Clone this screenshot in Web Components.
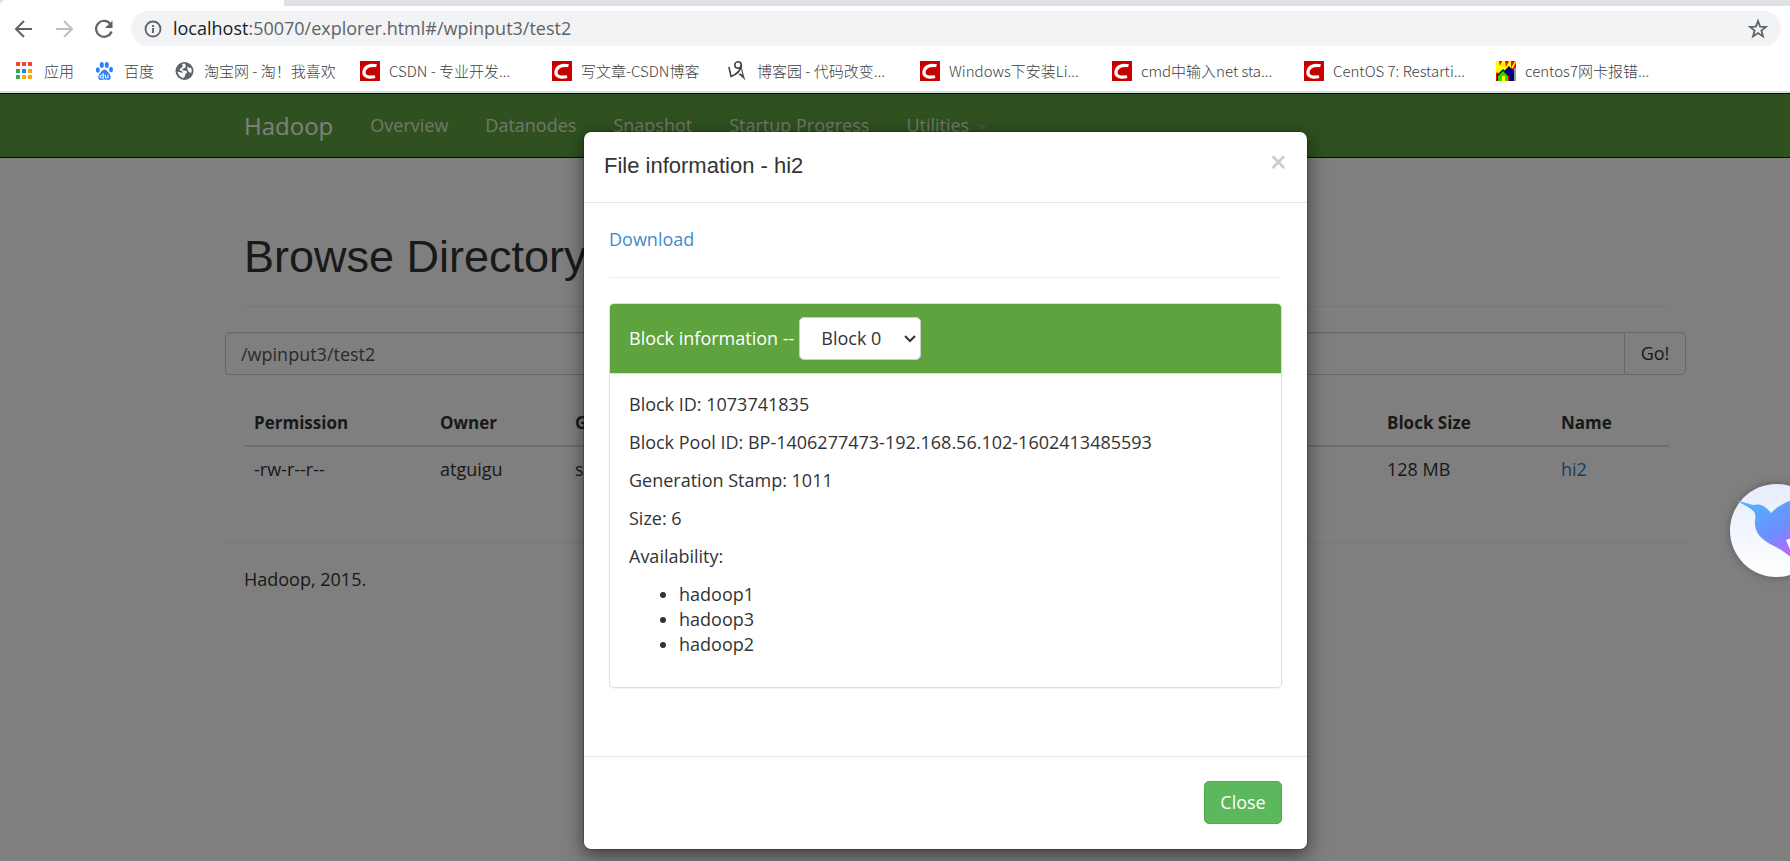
<!DOCTYPE html>
<html lang="zh-CN">
<head>
<meta charset="utf-8">
<title>Browsing HDFS</title>
<style>
html, body { margin: 0; height: 100%; }
body { font-family: "Open Sans", "Noto Sans CJK SC", sans-serif; font-size: 18px; line-height: 25px; color: #333; overflow: hidden; }
</style>
</head>
<body>
<browser-window>
  <browser-toolbar slot="chrome"></browser-toolbar>
  <bookmark-bar slot="chrome">
    <bookmark-link icon="apps" style="--w:80px">应用</bookmark-link>
    <bookmark-link icon="baidu" style="--w:80px">百度</bookmark-link>
    <bookmark-link icon="globe" style="--w:185px">淘宝网 - 淘！我喜欢</bookmark-link>
    <bookmark-link icon="csdn">CSDN - 专业开发...</bookmark-link>
    <bookmark-link icon="csdn" style="--w:176px">写文章-CSDN博客</bookmark-link>
    <bookmark-link icon="cnblogs">博客园 - 代码改变...</bookmark-link>
    <bookmark-link icon="csdn">Windows下安装Li...</bookmark-link>
    <bookmark-link icon="csdn">cmd中输入net sta...</bookmark-link>
    <bookmark-link icon="csdn">CentOS 7: Restarti...</bookmark-link>
    <bookmark-link icon="house">centos7网卡报错...</bookmark-link>
  </bookmark-bar>
  <hadoop-navbar></hadoop-navbar>
  <hadoop-explorer></hadoop-explorer>
  <file-dialog slot="overlay" heading="File information - hi2">
    <block-panel>
      <p>Block ID: 1073741835</p>
      <p>Block Pool ID: BP-1406277473-192.168.56.102-1602413485593</p>
      <p>Generation Stamp: 1011</p>
      <p>Size: 6</p>
      <p>Availability:</p>
      <ul><li>hadoop1</li><li>hadoop3</li><li>hadoop2</li></ul>
    </block-panel>
  </file-dialog>
  <bird-widget slot="overlay"></bird-widget>
</browser-window>

<script>
const define = (name, html, setup) => {
  const template = document.createElement('template');
  template.innerHTML = html;
  customElements.define(name, class extends HTMLElement {
    constructor() {
      super();
      this.attachShadow({ mode: 'open' }).append(template.content.cloneNode(true));
    }
    connectedCallback() { if (setup) setup(this, this.shadowRoot); }
  });
};

define('browser-window', `
<style>
:host { display: flex; flex-direction: column; height: 100vh; overflow: hidden; }
.tabs { height: 6px; background: #dee1e6; }
.tab { display: block; height: 6px; width: 284px; background: #fff; border-radius: 6px 0 0 0; }
.chrome { background: #fff; border-bottom: 2px solid #dcdde0; }
main { flex: 1; position: relative; overflow: hidden; background: #fff; }
</style>
<div class="tabs"><span class="tab"></span></div>
<div class="chrome"><slot name="chrome"></slot></div>
<main><slot></slot><slot name="overlay"></slot></main>`);

define('browser-toolbar', `
<style>
:host { display: flex; align-items: center; gap: 16px; padding: 5px 9px 4px 12px; }
button { border: 0; background: none; padding: 0; width: 24px; height: 24px; }
button svg { display: block; }
.address { flex: 1; display: flex; align-items: center; gap: 10px; height: 35px; border-radius: 18px; background: #f1f3f4; padding: 0 11px 0 12px; margin-left: -1px; }
.url { flex: 1; color: #5f6368; white-space: nowrap; }
.url b { font-weight: 400; color: #202124; }
</style>
<button aria-label="Back"><svg width="24" height="24" viewBox="0 0 24 24" fill="none" stroke="#5f6368" stroke-width="2"><path d="M20 12H4.500M12 4l-8 8 8 8"/></svg></button>
<button aria-label="Forward"><svg width="24" height="24" viewBox="0 0 24 24" fill="none" stroke="#bdc1c6" stroke-width="2"><path d="M4 12h15.500M12 4l8 8-8 8"/></svg></button>
<button aria-label="Reload"><svg width="24" height="24" viewBox="0 0 24 24"><path d="M18.500 7A8 8 0 1 0 19.600 14.500" fill="none" stroke="#5f6368" stroke-width="2.200"/><path d="M20.500 3.500v7.500H13z" fill="#5f6368"/></svg></button>
<div class="address">
<svg width="20" height="20" viewBox="0 0 20 20"><circle cx="10" cy="10" r="7.500" fill="none" stroke="#5f6368" stroke-width="1.800"/><path d="M9.100 9h1.900v5H9.100zM9.100 6h1.900v1.900H9.100z" fill="#5f6368"/></svg>
<span class="url"><b>localhost</b>:50070/explorer.html#/wpinput3/test2</span>
<button aria-label="Bookmark this tab"><svg width="24" height="24" viewBox="0 0 24 24"><path d="M12 4l2.100 5.600 5.900.3-4.600 3.700 1.600 5.800-5-3.300-5 3.300 1.600-5.800L4 9.900l5.900-.3z" fill="none" stroke="#5f6368" stroke-width="1.800"/></svg></button>
</div>`);

define('bookmark-bar', `
<style>
:host { display: flex; align-items: center; height: 41px; padding-left: 15px; color: #3c4043; overflow: hidden; }
</style><slot></slot>`);

const ICONS = {
  apps: `<g><path fill="#f44336" d="M1 1h4v4H1zM7 1h4v4H7zM13 1h4v4h-4z"/><path fill="#34a853" d="M1 8h4v4H1zM1 14h4v4H1z"/><path fill="#1e88e5" d="M7 8h4v4H7z"/><path fill="#fbab00" d="M13 8h4v4h-4zM7 14h4v4H7zM13 14h4v4h-4z"/></g>`,
  baidu: `<g fill="#2b80ff"><ellipse cx="2.800" cy="9" rx="2" ry="2.700"/><ellipse cx="6.800" cy="4" rx="2" ry="2.900"/><ellipse cx="11.800" cy="4" rx="2" ry="2.900"/><ellipse cx="16" cy="8.500" rx="2" ry="2.700"/><path d="M9.500 8.500c2 0 3 2.300 4.500 3.700 2.300 2 2.600 6.800-1 6.800-1.500 0-2-.4-3.500-.4s-2 .4-3.500.4c-3.600 0-3.300-4.800-1-6.800C6.500 10.800 7.500 8.500 9.500 8.500z"/></g><path d="M8.300 12v5H6.500a1.300 1.300 0 0 1 0-3h1.800M10.300 13.500v2.300c0 1.600 2.700 1.600 2.700 0v-2.300V17" fill="none" stroke="#fff" stroke-width="1.100"/>`,
  globe: `<circle cx="9.500" cy="10" r="9" fill="#5f6368"/><path d="M10.500 2.800c-1 1.500 1 2 0 3.500-1.300 1.500-3 .7-3.200 2.400-.1 1.300 3.700.3 4.600 1.800.8 1.600-1.700 2-1.800 3.700 0 1-.8 2.200-1.600 2.800-2.400-.3-5.500-2.800-6-6.500 2 .5 3.500 1.300 5 1.200 1-.8-.8-2-2.500-2.300-.7-2.500 2-2.200 2.600-4 .4-1.300-.5-1.600-.4-2.300 1-.4 2.400-.5 3.300-.3z" fill="#fff"/><path d="M13 5.500c.5 1.500 1.500 1.600 3 1.200.9 1.600.9 3.700.3 5.100-1.300-.3-2.900-.6-3.200-2.400-.3-1.500-1.800-2.200-.1-3.900z" fill="#fff"/>`,
  csdn: `<path d="M0 0h20v20H0z" fill="#c80000"/><path d="M16.500 4.800C11.500 3.500 5 4.600 4 10.500 3.300 15.500 8.500 17.300 15 15.500" fill="none" stroke="#fff" stroke-width="3.200"/>`,
  cnblogs: `<g fill="none" stroke="#444" stroke-width="1.600"><path d="M1 6c.5 3 1.300 6 2 9.500C8 13.500 12.500 10.500 13.500 4.500"/><circle cx="10" cy="4" r="3.200"/></g><path d="M13 1c.8 5 1.500 10 4.500 18.500-2.300-2.500-4.300-4.300-6.800-6l1.200-1.300 2.400 1.500C13.300 9.500 12.800 5 13 1z" fill="#444"/>`,
  house: `<path d="M0 0h20v20H0z" fill="#f00"/><path d="M0 0h3l1 5 2-5h3l1 6 3-6h2l0 7 4-7h1v1l-3 6-4 1-3 4-4-3-3 4-2-2-2 3z" fill="#ff0"/><path d="M1 14l6-6 5 5v7H1z" fill="#111"/><path d="M2 15l5-5 5 5v5H9v-5H6v5H2z" fill="#1fe000"/><path d="M8 10l5-5 6 6v9h-6v-5z" fill="#000080"/><path d="M6 15h3v5H6z" fill="#ff0"/><path d="M18 7h2v13h-2z" fill="#999"/>`
};
define('bookmark-link', `
<style>
:host { flex: 0 0 auto; width: var(--w, 192px); font: 300 15px/20px "Noto Sans CJK SC", sans-serif; }
a { display: flex; align-items: center; gap: 9px; color: inherit; text-decoration: none; white-space: nowrap; }
svg { flex: none; }
</style>
<a href="#"><svg width="20" height="20" viewBox="0 0 20 20"></svg><slot></slot></a>`,
(host, root) => { root.querySelector('svg').innerHTML = ICONS[host.getAttribute('icon')]; });

define('hadoop-navbar', `
<style>
:host { display: block; background: #5fa33e; border: solid #101010; border-width: 1px 0; }
nav { display: flex; align-items: center; height: 63px; padding: 0 104px 0 244px; gap: 37px; }
a { color: #dcf0d3; text-decoration: none; white-space: nowrap; }
.brand { font-size: 24px; color: #fff; }
.caret { display: inline-block; border: 5px solid transparent; border-top-color: #999; border-bottom: 0; vertical-align: middle; margin-left: 3px; }
</style>
<nav><a class="brand" href="#">Hadoop</a><a href="#">Overview</a><a href="#">Datanodes</a><a href="#">Snapshot</a><a href="#">Startup Progress</a><a href="#">Utilities <span class="caret"></span></a></nav>`);

define('hadoop-explorer', `
<style>
:host { display: block; padding: 62px 104px 0 225px; }
header, .listing, footer { margin: 0 17px 0 19px; }
header { border-bottom: 1px solid #eee; padding: 12px 0 24px; margin-bottom: 25px; }
h1 { margin: 0; font: 500 45px/50px "Liberation Sans", sans-serif; }
form { display: flex; }
input { flex: 1; box-sizing: border-box; height: 43px; padding: 0 15px; border: 1px solid #ccc; border-right: 0; border-radius: 5px 0 0 5px; font: inherit; color: #555; background: #fff; box-shadow: inset 0 1px 1px rgba(0,0,0,.075); }
button { height: 43px; width: 62px; padding: 0; border: 1px solid #ccc; border-radius: 0 5px 5px 0; background: #fff; font: inherit; color: #333; }
table { width: 100%; margin-top: 25px; border-collapse: collapse; table-layout: fixed; }
th, td { text-align: left; padding: 10px; vertical-align: top; }
th { border-bottom: 2px solid #ddd; font-size: 17px; }
.c1 { width: 166px; } .c2 { width: 115px; } .c4 { width: 154px; } .c5 { width: 98px; }
a { color: #337ab7; text-decoration: none; }
hr { border: 0; border-top: 1px solid #eee; margin: 50px 0 24px; }
p { margin: 0; }
</style>
<header><h1>Browse Directory</h1></header>
<form><input type="text" aria-label="Directory" value="/wpinput3/test2"><button type="button">Go!</button></form>
<div class="listing"><table>
<thead><tr><th class="c1">Permission</th><th class="c2">Owner</th><th>Group</th><th class="c4">Block Size</th><th class="c5">Name</th></tr></thead>
<tbody><tr><td>-rw-r--r--</td><td>atguigu</td><td>super</td><td>128 MB</td><td><a href="#">hi2</a></td></tr></tbody>
</table></div>
<hr>
<footer><p>Hadoop, 2015.</p></footer>`);

define('file-dialog', `
<style>
:host { position: absolute; inset: 0; background: rgba(0,0,0,.5); }
section { box-sizing: border-box; width: 725px; margin: 38px auto 0 583px; background: #fff; background-clip: padding-box; border: 1px solid rgba(0,0,0,.2); border-radius: 8px; box-shadow: 0 6px 19px rgba(0,0,0,.5); }
header { display: flex; justify-content: space-between; align-items: flex-start; height: 71px; box-sizing: border-box; padding: 18px 20px; border-bottom: 1px solid #e5e5e5; }
h4 { margin: 0; font: 500 22px/32px "Liberation Sans", sans-serif; }
.x { border: 0; background: none; padding: 0; font: 600 30px/24px "Open Sans", sans-serif; color: #ccc; }
.body { padding: 24px 25px 25px; }
.download { color: #428bca; text-decoration: none; }
hr { border: 0; border-top: 1px solid #eee; margin: 25px 0; }
footer { display: flex; justify-content: flex-end; padding: 24px 25px 25px; border-top: 1px solid #e5e5e5; }
.close { width: 78px; height: 43px; padding: 0; border: 1px solid #4cae4c; border-radius: 5px; background: #5cb85c; color: #fff; font: inherit; }
</style>
<section role="dialog" aria-labelledby="title">
<header><h4 id="title"></h4><button class="x" aria-label="Dismiss">×</button></header>
<div class="body"><a class="download" href="#">Download</a><hr><slot></slot></div>
<footer><button class="close">Close</button></footer>
</section>`,
(host, root) => { root.querySelector('h4').textContent = host.getAttribute('heading'); });

define('block-panel', `
<style>
:host { display: block; border: 1px solid #d6e9c6; border-radius: 5px; box-shadow: 0 1px 1px rgba(0,0,0,.05); margin-bottom: 43px; }
.head { display: flex; align-items: center; gap: 5px; height: 69px; padding-left: 19px; background: #5fa33e; border-bottom: 1px solid #d6e9c6; border-radius: 4px 4px 0 0; color: #fff; }
.pick { position: relative; display: flex; }
select { appearance: none; width: 122px; height: 43px; padding: 0 21px; border: 1px solid #ccc; border-radius: 5px; background: #fff; color: #333; font: inherit; }
.pick svg { position: absolute; right: 5px; top: 17px; pointer-events: none; }
.body { padding: 18px 19px; }
::slotted(p) { margin: 0 0 13px; }
::slotted(ul) { margin: 0 0 12px; padding-left: 50px; }
</style>
<div class="head"><label for="block">Block information --</label>
<span class="pick"><select id="block"><option>Block 0</option></select><svg width="12" height="10" viewBox="0 0 12 10"><path d="M1 2l5 5 5-5" fill="none" stroke="#333" stroke-width="2"/></svg></span></div>
<div class="body"><slot></slot></div>`);

define('bird-widget', `
<style>
:host { position: absolute; right: -33px; top: 391px; width: 93px; height: 93px; border-radius: 50%; background: linear-gradient(#e6ecfc, #fff); box-shadow: 0 0 8px rgba(0,0,0,.3); }
svg { display: block; }
</style>
<svg width="93" height="93" viewBox="0 0 93 93" aria-hidden="true">
<defs><linearGradient id="g" gradientUnits="userSpaceOnUse" x1="26" y1="20" x2="66" y2="72"><stop offset="0" stop-color="#58aefc"/><stop offset=".5" stop-color="#6a90ff"/><stop offset=".8" stop-color="#a273ff"/><stop offset="1" stop-color="#c45cff"/></linearGradient></defs>
<path d="M7 16.500l16 4.500c9-2.500 14 3 18 8 5-5 11-9.500 22-13.500v60C54 66 47 64 40 60c-9-5-16-12-15-23 1-7 0-9-4-12-4-3-9-5-14-8.500z" fill="url(#g)"/>
<path d="M56 56l7-2v18z" fill="#fff"/>
</svg>`);
</script>
</body>
</html>
